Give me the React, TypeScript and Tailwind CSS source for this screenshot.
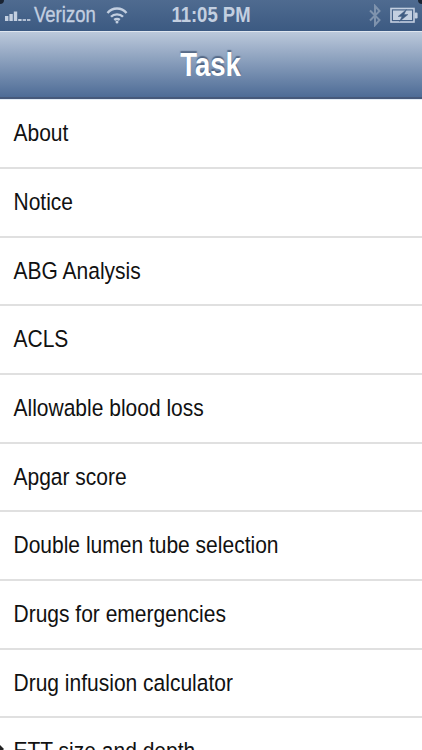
const items = [
  "About",
  "Notice",
  "ABG Analysis",
  "ACLS",
  "Allowable blood loss",
  "Apgar score",
  "Double lumen tube selection",
  "Drugs for emergencies",
  "Drug infusion calculator",
  "ETT size and depth",
];

function Signal() {
  return (
    <svg width="26" height="14" viewBox="0 0 26 14" className="ml-[5px] shrink-0">
      <g fill="#c3cfe0">
        <rect x="0" y="8" width="3.4" height="5" />
        <rect x="4.4" y="6" width="3.4" height="7" />
        <rect x="8.8" y="3.5" width="3.4" height="9.5" />
        <rect x="13.2" y="11" width="3.4" height="2" />
        <rect x="17.6" y="11" width="3.4" height="2" opacity="0.85" />
        <rect x="22" y="11" width="3.4" height="2" opacity="0.85" />
      </g>
    </svg>
  );
}

function Wifi() {
  return (
    <svg width="22" height="18" viewBox="0 0 22 18" fill="none" stroke="#c3cfe0" strokeWidth="2.4">
      <path d="M1.5 7 C6.5 1 15.5 1 20.5 7" />
      <path d="M5 10.8 C8 7.5 14 7.5 17 10.8" />
      <path d="M8.3 14 C9.8 12.6 12.2 12.6 13.7 14" />
      <circle cx="11" cy="16" r="1.5" fill="#c3cfe0" stroke="none" />
    </svg>
  );
}

function Bluetooth() {
  return (
    <svg width="12" height="23" viewBox="0 0 12 23" fill="none" stroke="#7f93ad" strokeWidth="2">
      <path d="M1 6.5 L10.5 16 L6 21 V2 L10.5 7 L1 16.5" />
    </svg>
  );
}

function Battery() {
  return (
    <svg width="29" height="17" viewBox="0 0 29 17" fill="none">
      <rect x="1" y="1.5" width="23" height="13.5" stroke="#c3cfe0" strokeWidth="1.6" />
      <rect x="3" y="3.5" width="19" height="9.5" fill="#c3cfe0" />
      <rect x="24.6" y="5.5" width="3" height="6" rx="1.2" fill="#c3cfe0" />
      <path d="M16.5 2.5 L8 9.5 H12 L9.5 14.5 L18 7.5 H14 Z" fill="#3f5c82" stroke="#3f5c82" strokeWidth="0.4" />
    </svg>
  );
}

export default function App() {
  return (
    <div className="relative h-[750px] w-[422px] overflow-hidden bg-white font-['Liberation_Sans',Arial,sans-serif]">
      <div className="flex h-[32px] items-center justify-between border-b border-[#dfe6ef] bg-gradient-to-b from-[#4f6b90] to-[#3c5a82] pb-[1px]">
        <div className="flex w-[130px] items-center">
          <Signal />
          <span className="ml-[3px] inline-block scale-y-[1.15] text-[18.5px] font-medium leading-none text-[#c3cfe0] [-webkit-text-stroke:0.3px_#c3cfe0]">Verizon</span>
          <span className="ml-[10px]"><Wifi /></span>
        </div>
        <span className="inline-block scale-y-[1.15] text-[18.5px] font-bold leading-none text-[#c3cfe0]">11:05 PM</span>
        <div className="flex w-[130px] items-center justify-end gap-[9px] pr-[3px]">
          <Bluetooth />
          <Battery />
        </div>
      </div>
      <div className="flex h-[67.3px] items-center justify-center border-b-2 border-[#46597a] bg-gradient-to-b from-[#bcc9db] to-[#4e6c96] pr-[1px]">
        <span className="inline-block scale-y-[1.18] text-[27.5px] font-bold leading-none text-white [text-shadow:0_-1px_1px_rgba(60,80,110,0.7)]">Task</span>
      </div>
      <ul className="border-t border-[#e3ecf5]">
        {items.map((t) => (
          <li key={t} className="flex h-[68.7px] items-center border-b-2 border-[#e0e0e0] pb-[2px] pl-[13.5px] text-[21px] leading-none text-[#111]">
            <span className="inline-block scale-y-[1.18]">{t}</span>
          </li>
        ))}
      </ul>
      <div className="absolute left-0 top-0 h-[4px] w-[4px] rounded-br-[4px] bg-[#1a2433]" />
      <div className="absolute right-0 top-0 h-[4px] w-[4px] rounded-bl-[4px] bg-[#1a2433]" />
      <div className="absolute left-0 top-[745px] h-0 w-0 border-y-[4px] border-l-[4px] border-y-transparent border-l-[#222]" />
    </div>
  );
}
